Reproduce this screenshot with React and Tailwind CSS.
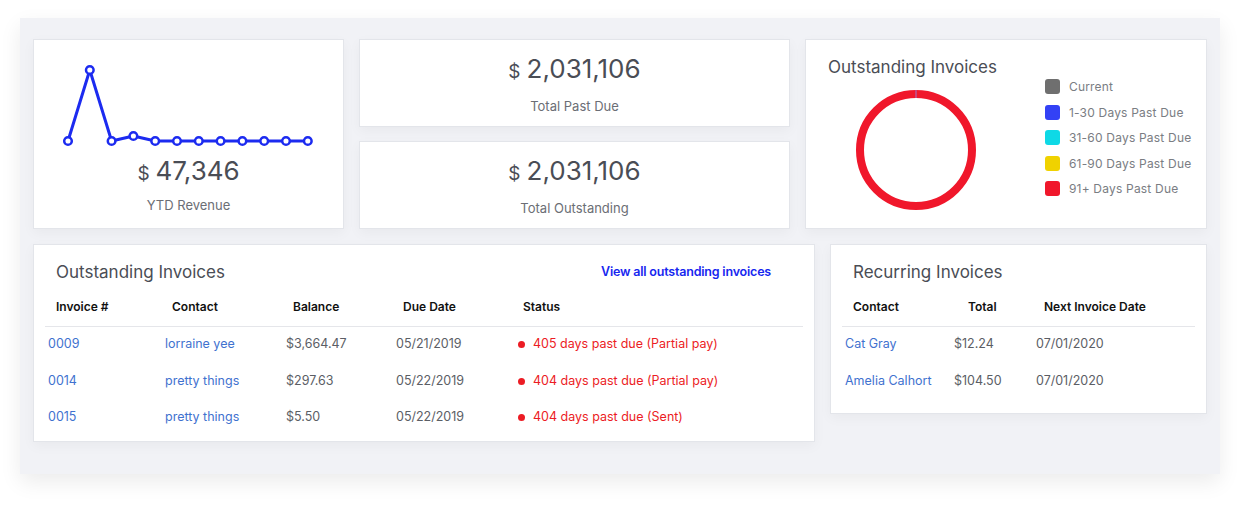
const pts = [140, 69, 140, 135, 140, 140, 140, 140, 140, 140, 140, 140];

const Card = ({ className = "", children }) => (
  <div className={`bg-white border border-[#e3e5ea] shadow-[0_4px_12px_rgba(0,0,0,0.04)] ${className}`}>{children}</div>
);

const Stat = ({ value, label }) => (
  <Card className="h-[88px] flex flex-col items-center justify-center pt-[6px]">
    <div className="flex items-baseline gap-1.5 text-[#4a4d55]">
      <span className="text-[19px]">$</span>
      <span className="text-[26px] leading-none">{value}</span>
    </div>
    <div className="text-[13px] text-[#6b6e75] mt-[10px]">{label}</div>
  </Card>
);

const legend = [
  ["#6f6f6f", "Current"],
  ["#3341f5", "1-30 Days Past Due"],
  ["#0ed9e6", "31-60 Days Past Due"],
  ["#f0d200", "61-90 Days Past Due"],
  ["#f0172b", "91+ Days Past Due"],
];

const rows = [
  ["0009", "lorraine yee", "$3,664.47", "05/21/2019", "405 days past due (Partial pay)"],
  ["0014", "pretty things", "$297.63", "05/22/2019", "404 days past due (Partial pay)"],
  ["0015", "pretty things", "$5.50", "05/22/2019", "404 days past due (Sent)"],
];

export default function App() {
  const path = pts.map((y, i) => `${i ? "L" : "M"}${34 + i * 21.8} ${y - 39}`).join(" ");
  return (
    <div className="w-[1240px] h-[506px] bg-white pt-[18px] px-5" style={{ fontFamily: "Inter, 'Liberation Sans', sans-serif" }}>
      <div className="h-[456px] bg-[#f1f2f6] shadow-[0_8px_20px_rgba(0,0,0,0.08)] pt-[21px] px-[13px] flex flex-col gap-[15px]">
        <div className="flex gap-[15px] h-[190px]">
          <Card className="w-[311px] relative">
            <svg width="311" height="120" className="absolute left-0 top-0">
              <path d={path} fill="none" stroke="#1c2bf0" strokeWidth="3" strokeLinejoin="round" />
              {pts.map((y, i) => (
                <circle key={i} cx={34 + i * 21.8} cy={y - 39} r="3.8" fill="#fff" stroke="#1c2bf0" strokeWidth="2.5" />
              ))}
            </svg>
            <div className="absolute left-0 right-0 top-[118px] flex flex-col items-center">
              <div className="flex items-baseline gap-1.5 text-[#4a4d55]">
                <span className="text-[19px]">$</span>
                <span className="text-[26px] leading-none">47,346</span>
              </div>
              <div className="text-[13px] text-[#6b6e75] mt-[7px]">YTD Revenue</div>
            </div>
          </Card>
          <div className="w-[431px] flex flex-col gap-[14px]">
            <Stat value="2,031,106" label="Total Past Due" />
            <Stat value="2,031,106" label="Total Outstanding" />
          </div>
          <Card className="flex-1 flex pl-[22px] pt-[15px]">
            <div>
              <div className="text-[17px] text-[#4a4d55]">Outstanding Invoices</div>
              <svg width="124" height="124" className="ml-[26px] mt-[7px]">
                <circle cx="62" cy="62" r="56" fill="none" stroke="#f0172b" strokeWidth="8" />
                <line x1="62" y1="2" x2="62" y2="10" stroke="#8b8ff5" strokeWidth="0.8" />
              </svg>
            </div>
            <div className="ml-[48px] mt-[24px] flex flex-col gap-[10.5px]">
              {legend.map(([c, t]) => (
                <div key={t} className="flex items-center gap-[9px] text-[12px] leading-[15px] text-[#7a7d83] tracking-[0.2px]">
                  <span className="w-[15px] h-[15px] rounded-[3px]" style={{ background: c }} />
                  {t}
                </div>
              ))}
            </div>
          </Card>
        </div>
        <div className="flex gap-[15px] items-start">
          <Card className="w-[782px] h-[198px] px-[11px] pt-[15px]">
            <div className="flex justify-between items-center px-[11px]">
              <span className="text-[17px] text-[#4a4d55]">Outstanding Invoices</span>
              <span className="text-[12.5px] font-semibold text-[#1727f0] mr-[21px] tracking-[-0.2px]">View all outstanding invoices</span>
            </div>
            <div className="flex text-[12px] font-semibold text-[#111] border-b border-[#e5e6ea] h-[39px] items-center mt-[2px]">
              <span className="w-[127px] pl-[11px]">Invoice #</span>
              <span className="w-[121px]">Contact</span>
              <span className="w-[110px]">Balance</span>
              <span className="w-[120px]">Due Date</span>
              <span>Status</span>
            </div>
            {rows.map((r) => (
              <div key={r[0]} className="flex text-[12.5px] h-[36.5px] items-center">
                <span className="w-[120px] pl-[3px] text-[#3f72cf]">{r[0]}</span>
                <span className="w-[121px] text-[#3f72cf]">{r[1]}</span>
                <span className="w-[110px] text-[#5b5e65]">{r[2]}</span>
                <span className="w-[122px] text-[#5b5e65]">{r[3]}</span>
                <span className="flex items-center gap-[8px] text-[#ec1c24]">
                  <span className="w-[7px] h-[7px] rounded-full bg-[#ec1c24]" />
                  {r[4]}
                </span>
              </div>
            ))}
          </Card>
          <Card className="flex-1 h-[170px] px-[11px] pt-[15px]">
            <div className="px-[11px] text-[17px] text-[#4a4d55]">Recurring Invoices</div>
            <div className="flex text-[12px] font-semibold text-[#111] border-b border-[#e5e6ea] h-[39px] items-center mt-[2px]">
              <span className="w-[126px] pl-[11px]">Contact</span>
              <span className="w-[76px]">Total</span>
              <span>Next Invoice Date</span>
            </div>
            {[["Cat Gray", "$12.24"], ["Amelia Calhort", "$104.50"]].map((r) => (
              <div key={r[0]} className="flex text-[12.5px] h-[36.5px] items-center">
                <span className="w-[112px] pl-[3px] text-[#3f72cf]">{r[0]}</span>
                <span className="w-[82px] text-[#5b5e65]">{r[1]}</span>
                <span className="text-[#5b5e65]">07/01/2020</span>
              </div>
            ))}
          </Card>
        </div>
      </div>
    </div>
  );
}
